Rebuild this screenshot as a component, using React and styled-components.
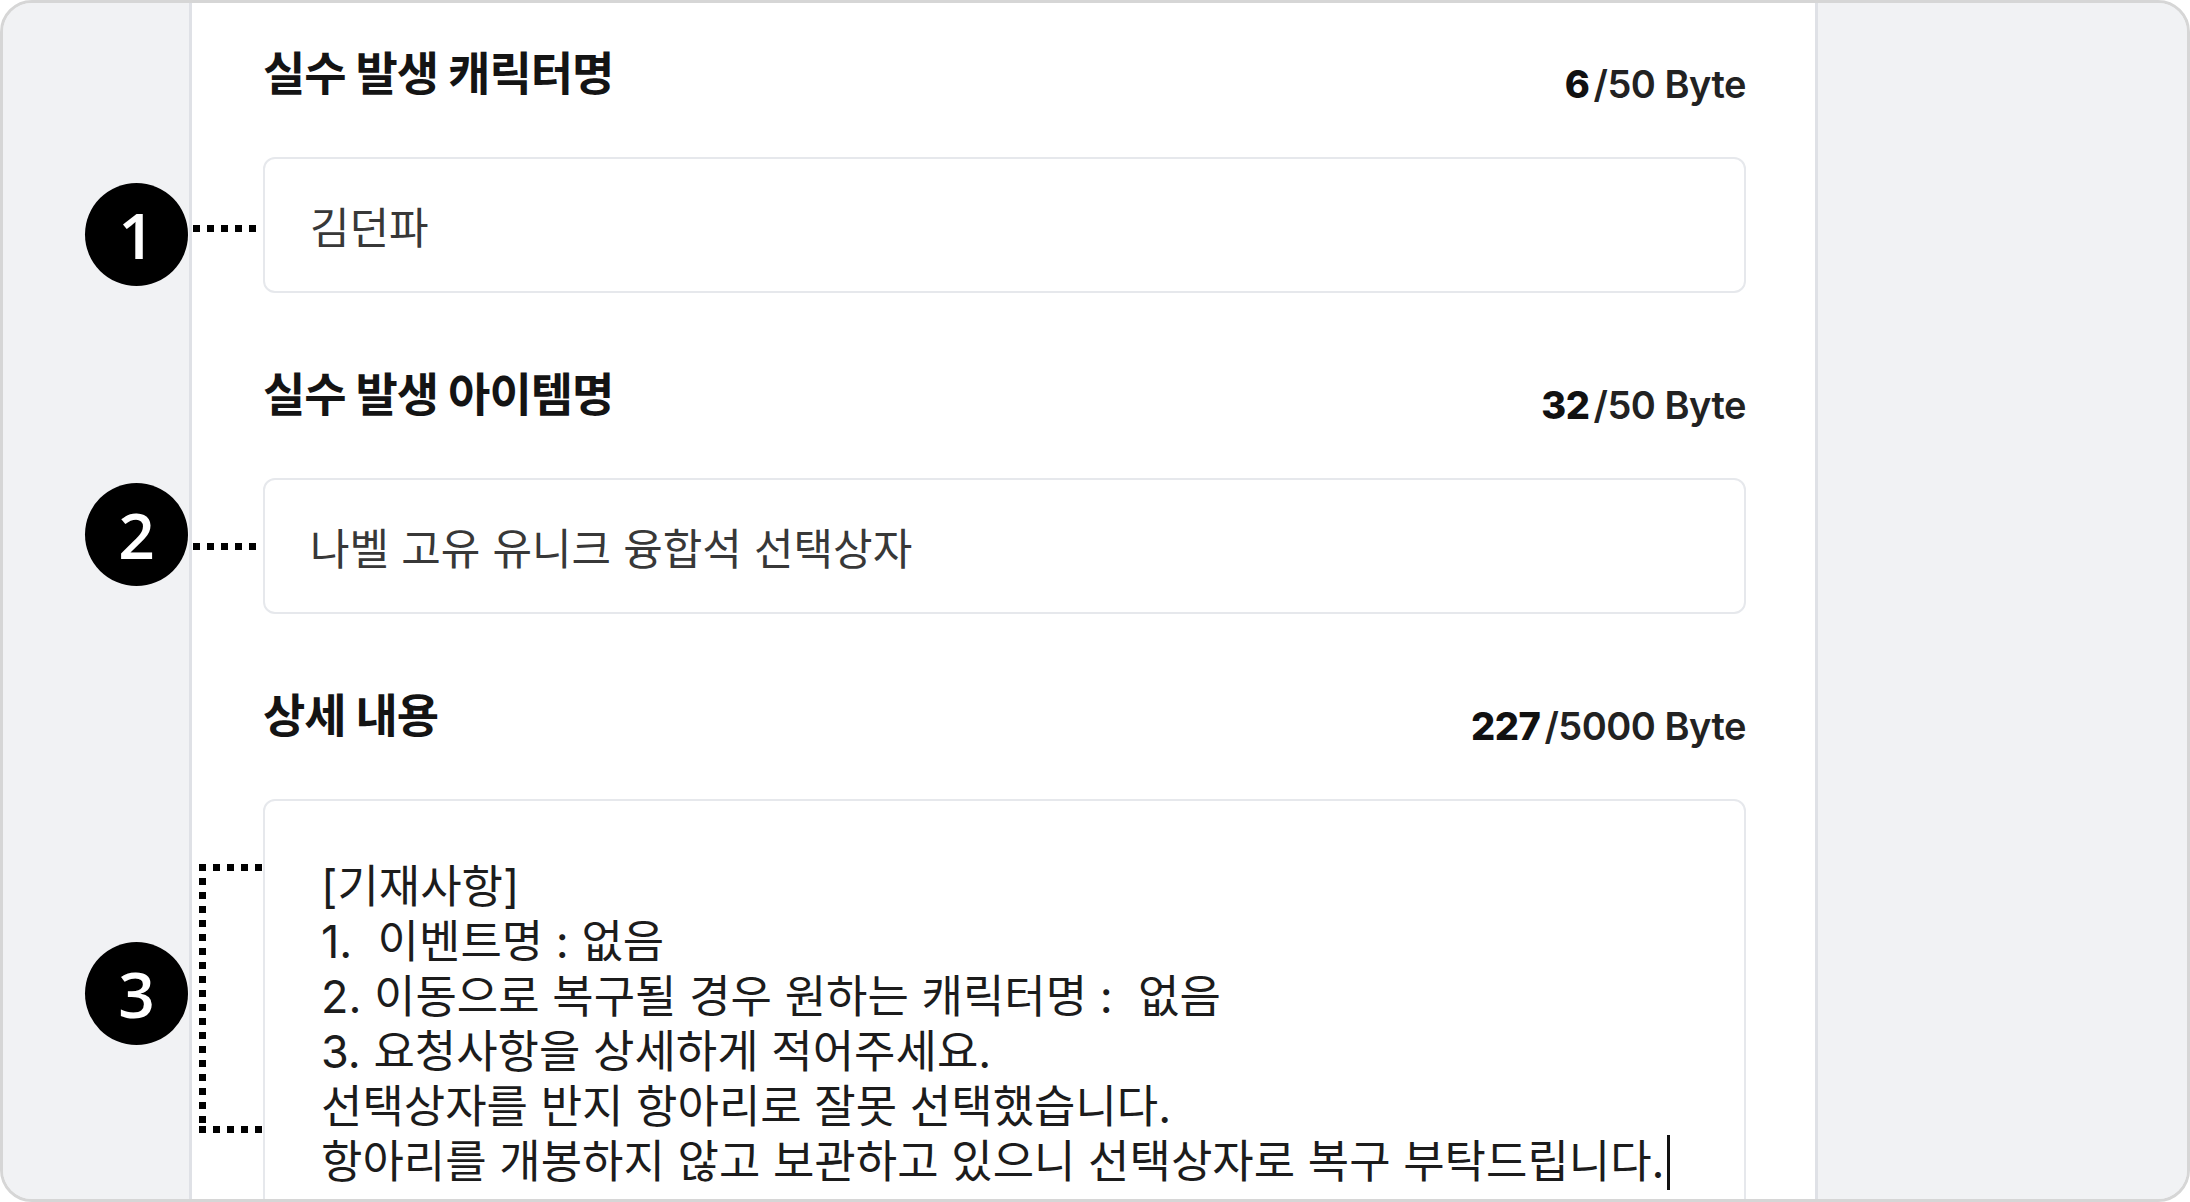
import styled, { createGlobalStyle } from "styled-components";

const GlobalStyle = createGlobalStyle`
  html, body {
    margin: 0;
    padding: 0;
    background: #ffffff;
  }
  * {
    box-sizing: border-box;
  }
`;

const FONT = `Inter, "Noto Sans CJK KR", sans-serif`;

const Frame = styled.div`
  width: 2190px;
  height: 1202px;
  border: 3px solid #d6d6d6;
  border-radius: 32px;
  overflow: hidden;
  display: flex;
  background: #f1f2f4;
`;

const Gutter = styled.div`
  flex: ${(props) => (props.$side === "right" ? "1" : "0 0 189px")};
  background: #f1f2f4;
  border-right: ${(props) => (props.$side === "left" ? "3px solid #dfe1e6" : "none")};
  border-left: ${(props) => (props.$side === "right" ? "3px solid #dfe1e6" : "none")};
`;

const Panel = styled.div`
  flex: 0 0 1623px;
  background: #ffffff;
  padding: 40px 69px 0 71px;
  display: flex;
  flex-direction: column;
  font-family: ${FONT};
`;

const Field = styled.div`
  display: flex;
  flex-direction: column;
  margin-bottom: 71px;
`;

const Header = styled.div`
  height: 60px;
  display: flex;
  justify-content: space-between;
  align-items: flex-start;
  margin-bottom: 54px;
`;

const Label = styled.div`
  font-size: 46px;
  line-height: 60px;
  font-weight: 700;
  letter-spacing: -1px;
  color: #141414;
`;

const Counter = styled.div`
  font-family: Inter, sans-serif;
  font-size: 38px;
  line-height: 60px;
  padding-top: 11px;
  font-weight: 600;
  color: #222;
  letter-spacing: -0.5px;
`;

const Count = styled.span`
  font-weight: 800;
  color: #111;
  margin-right: 4px;
`;

const Box = styled.div`
  position: relative;
`;

const Input = styled.input`
  display: block;
  width: 100%;
  height: 136px;
  border: 2px solid #e6e8ec;
  border-radius: 12px;
  padding: 0 0 0 45px;
  font-family: ${FONT};
  font-size: 43px;
  color: #383838;
  background: #fff;
  outline: none;
`;

const TextBox = styled.div`
  height: 520px;
  border: 2px solid #e6e8ec;
  border-radius: 12px;
  padding: 58px 40px 0 56px;
  font-family: ${FONT};
  font-size: 45px;
  line-height: 55px;
  color: #1c1c1c;
  white-space: pre-wrap;
`;

const Caret = styled.span`
  display: inline-block;
  width: 3px;
  height: 55px;
  background: #111;
  vertical-align: -12px;
  margin-left: 2px;
`;

const Marker = styled.div`
  position: absolute;
  left: -178px;
  top: ${(props) => props.$top}px;
  width: 103px;
  height: 103px;
  border-radius: 50%;
  background: #000;
  color: #fff;
  display: flex;
  align-items: center;
  justify-content: center;
  font-family: "Open Sans", sans-serif;
  font-weight: 600;
  font-size: 64px;
  line-height: 1;
`;

const Dots = styled.div`
  position: absolute;
  left: -70px;
  top: ${(props) => props.$top}px;
  width: 64px;
  height: 7px;
  background: repeating-linear-gradient(90deg, #000 0 7px, transparent 7px 14px);
`;

const Bracket = styled.div`
  position: absolute;
  left: -64px;
  top: ${(props) => props.$top}px;
  width: 64px;
  height: ${(props) => props.$height}px;
  background-image:
    repeating-linear-gradient(90deg, #000 0 7px, transparent 7px 14px),
    repeating-linear-gradient(90deg, #000 0 7px, transparent 7px 14px),
    repeating-linear-gradient(180deg, #000 0 7px, transparent 7px 14px);
  background-size: 100% 7px, 100% 7px, 7px 100%;
  background-position: left top, left bottom, left top;
  background-repeat: no-repeat;
`;

const detail = `[기재사항]
1.  이벤트명 : 없음
2. 이동으로 복구될 경우 원하는 캐릭터명 :  없음
3. 요청사항을 상세하게 적어주세요.
선택상자를 반지 항아리로 잘못 선택했습니다.
항아리를 개봉하지 않고 보관하고 있으니 선택상자로 복구 부탁드립니다.`;

const fields = [
  { label: "실수 발생 캐릭터명", count: "6", max: "/50 Byte", value: "김던파", n: 1, circle: 26, dots: 68 },
  { label: "실수 발생 아이템명", count: "32", max: "/50 Byte", value: "나벨 고유 유니크 융합석 선택상자", n: 2, circle: 5, dots: 65 },
];

const App = () => (
  <>
    <GlobalStyle />
    <Frame>
      <Gutter $side="left" />
      <Panel>
        {fields.map((f) => (
          <Field key={f.n}>
            <Header>
              <Label>{f.label}</Label>
              <Counter>
                <Count>{f.count}</Count>
                {f.max}
              </Counter>
            </Header>
            <Box>
              <Input readOnly value={f.value} />
              <Dots $top={f.dots} />
              <Marker $top={f.circle}>{f.n}</Marker>
            </Box>
          </Field>
        ))}
        <Field>
          <Header>
            <Label>상세 내용</Label>
            <Counter>
              <Count>227</Count>/5000 Byte
            </Counter>
          </Header>
          <Box>
            <TextBox>
              {detail}
              <Caret />
            </TextBox>
            <Bracket $top={65} $height={269} />
            <Marker $top={143}>3</Marker>
          </Box>
        </Field>
      </Panel>
      <Gutter $side="right" />
    </Frame>
  </>
);

export default App;
